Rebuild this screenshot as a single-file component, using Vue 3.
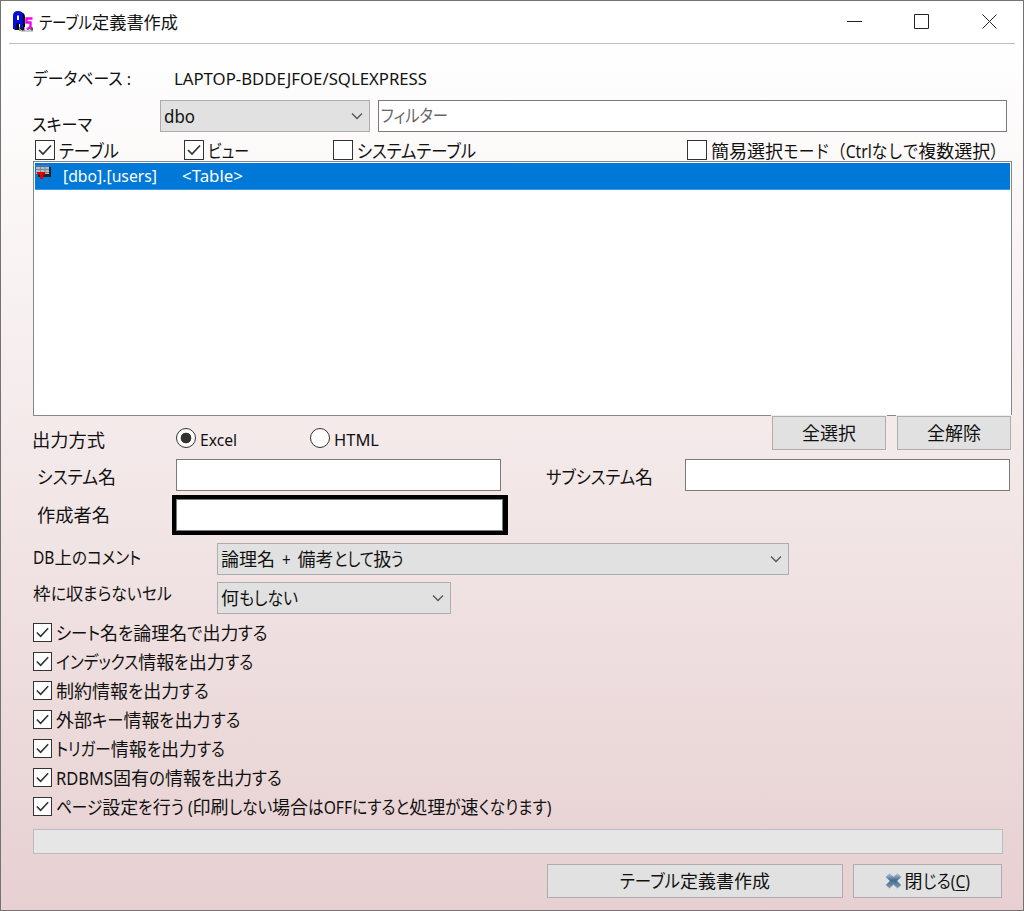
<script setup>
import { defineComponent, h, onMounted, ref } from 'vue'

// Text set to a given width: kanji keep their full width, kana and latin are condensed.
const FitText = defineComponent({
  props: { text: String, width: Number, underline: String },
  setup(props) {
    const root = ref(null)
    const runs = props.text.match(/[\u4e00-\u9fff]+|[^\u4e00-\u9fff]+/g)
    const styles = ref(runs.map(() => ({})))
    onMounted(() => {
      const sizes = [...root.value.children].map(e => e.getBoundingClientRect().width)
      const kanji = runs.map(r => /^[\u4e00-\u9fff]/.test(r))
      const all = kanji.every(Boolean)
      const flex = kanji.map(k => all || !k)
      const fixed = sizes.reduce((s, w, i) => s + (flex[i] ? 0 : w), 0)
      const loose = sizes.reduce((s, w, i) => s + (flex[i] ? w : 0), 0)
      const k = (props.width - fixed) / loose
      styles.value = runs.map((_, i) => flex[i]
        ? { width: sizes[i] * k + 'px', transform: `scaleX(${k})` }
        : {})
    })
    const body = r => {
      if (!props.underline || !r.includes(props.underline)) return r
      const [a, b] = r.split(props.underline)
      return [a, h('u', props.underline), b]
    }
    return () => h('span', { ref: root, class: 'fit' },
      runs.map((r, i) => h('span', { class: 'run', style: styles.value[i] }, body(r))))
  },
})

const filters = [
  { text: 'テーブル', width: 60, on: true, cls: 'c1' },
  { text: 'ビュー', width: 41, on: true, cls: 'c2' },
  { text: 'システムテーブル', width: 119, on: false, cls: 'c3' },
  { text: '簡易選択モード（Ctrlなしで複数選択）', width: 295, on: false, cls: 'c4' },
]
const options = [
  ['シート名を論理名で出力する', 212],
  ['インデックス情報を出力する', 197],
  ['制約情報を出力する', 153],
  ['外部キー情報を出力する', 184],
  ['トリガー情報を出力する', 169],
  ['RDBMS固有の情報を出力する', 226],
  ['ページ設定を行う (印刷しない場合はOFFにすると処理が速くなります)', 495],
]
</script>

<template>
  <div class="window">
    <header class="titlebar">
      <svg class="appicon" width="24" height="24" viewBox="0 0 24 24">
        <path d="M2.500 20V7Q2.500 3 7 2Q13 2 13 7V20H9V14H7V20Z" fill="#000" />
        <path d="M1 19V6Q1 1 6 1T11 6V19H8V13.500H4.500V19Z" fill="#0808e0" />
        <path d="M5 5.500h2v4.500H5z" fill="#fff" />
        <path d="M20.500 8.500H14.500V12.500H18.500V17L15 19.500" fill="none" stroke="#f400e8" stroke-width="2.400" />
        <path d="M8 17v4m0-4 3 4m0-4v4m9-4v4m-2-2h3" fill="none" stroke="#222" stroke-width="1" />
        <path d="M9 21h12M12.500 17v4m2-3h2" fill="none" stroke="#999" stroke-width="1" />
      </svg>
      <FitText class="title" text="テーブル定義書作成" :width="139" />
      <svg class="controls" width="152" height="18" viewBox="0 0 152 18" fill="none" stroke="#222">
        <path d="M0 8.500H15" /><path d="M67.500 1.500H81.500V15.500H67.500Z" /><path d="M135.500 1.500 149.500 15.500M149.500 1.500 135.500 15.500" />
      </svg>
    </header>
    <main>
      <div class="row database">
        <FitText class="label" text="データベース :" :width="98" />
        <FitText text="LAPTOP-BDDEJFOE/SQLEXPRESS" :width="253" />
      </div>
      <div class="row schema">
        <FitText class="label" text="スキーマ" :width="60" />
        <div class="select"><FitText text="dbo" :width="31" /><svg class="chev" viewBox="0 0 12 8"><path d="M1 1.500 6 6.500 11 1.500" /></svg></div>
        <div class="input"><FitText text="フィルター" :width="67" /></div>
      </div>
      <div class="row filters">
        <div v-for="f in filters" :key="f.text" class="option" :class="f.cls">
          <span class="box"><svg v-if="f.on" viewBox="0 0 18 18"><path d="M3 9 7 13 15 4.500" /></svg></span>
          <FitText :text="f.text" :width="f.width" />
        </div>
      </div>
      <div class="list">
        <div class="item">
          <svg width="17" height="17" viewBox="0 0 17 17">
            <path d="M3 3H16V13H3Z" fill="#24242c" /><path d="M1 2H14V10H1Z" fill="#b8bcc4" />
            <path d="M1 1H14V3H1Z" fill="#3c78b8" /><path d="M1 5.500H14M1 8.500H14M5.500 3V10M10 3V10" stroke="#85888f" />
            <path d="M2 8H10V10.500H8V15H5V10.500H2Z" fill="#e80000" />
          </svg>
          <FitText class="name" text="[dbo].[users]" :width="94" />
          <FitText text="<Table>" :width="61" />
        </div>
      </div>
      <div class="row output">
        <FitText class="label" text="出力方式" :width="73" />
        <div class="radio first"><i class="on"></i><FitText text="Excel" :width="37" /></div>
        <div class="radio"><i></i><FitText text="HTML" :width="45" /></div>
        <div class="btn"><FitText text="全選択" :width="54" /></div>
        <div class="btn last"><FitText text="全解除" :width="54" /></div>
      </div>
      <div class="row system">
        <FitText class="label" text="システム名" :width="79" />
        <div class="input"></div>
        <FitText class="sub" text="サブシステム名" :width="107" />
        <div class="input"></div>
      </div>
      <div class="row author">
        <FitText class="label" text="作成者名" :width="73" />
        <div class="focus"><div class="input"></div></div>
      </div>
      <div class="row comment">
        <FitText class="label" text="DB上のコメント" :width="108" />
        <div class="select"><FitText class="spaced" text="論理名 + 備考として扱う" :width="183" /><svg class="chev" viewBox="0 0 12 8"><path d="M1 1.500 6 6.500 11 1.500" /></svg></div>
      </div>
      <div class="row cell">
        <FitText class="label" text="枠に収まらないセル" :width="139" />
        <div class="select"><FitText text="何もしない" :width="77" /><svg class="chev" viewBox="0 0 12 8"><path d="M1 1.500 6 6.500 11 1.500" /></svg></div>
      </div>
      <div class="options">
        <div v-for="o in options" :key="o[0]" class="option">
          <span class="box"><svg viewBox="0 0 18 18"><path d="M3 9 7 13 15 4.500" /></svg></span>
          <FitText :text="o[0]" :width="o[1]" />
        </div>
      </div>
      <div class="progress"></div>
      <footer>
        <div class="btn create"><FitText text="テーブル定義書作成" :width="150" /></div>
        <div class="btn close">
          <svg width="17" height="16" viewBox="0 0 17 16">
            <defs><linearGradient id="x" x1="0" y1="0" x2="0" y2="1"><stop offset="0" stop-color="#a9c0d4" /><stop offset=".45" stop-color="#426c90" /><stop offset="1" stop-color="#7797b5" /></linearGradient></defs>
            <path d="M4.500 1 8.500 4 12.500 1 16 4 12 8 16 12 12.500 15 8.500 11.500 4.500 15 1 12 5 8 1 4Z" fill="url(#x)" stroke="#7896b0" stroke-width=".6" />
          </svg>
          <FitText text="閉じる(C)" :width="65" underline="C" />
        </div>
      </footer>
    </main>
  </div>
</template>

<style>
body { margin: 0; }
.fit { display: inline-flex; white-space: pre; flex: none; line-height: 24px; height: 24px; }
.fit .run { display: block; flex: none; transform-origin: 0 50%; white-space: pre; }
.fit u { text-underline-offset: 2px; text-decoration-thickness: 1px; }
</style>

<style scoped>
.window { box-sizing: border-box; width: 1024px; height: 911px; border: 1px solid #747274; background: linear-gradient(#fff 0, #fff 43px, #e7d0d1 100%); color: #111; font: 18px/24px "Noto Sans", "Noto Sans CJK JP", sans-serif; font-feature-settings: "palt"; overflow: hidden; }
.window * { box-sizing: border-box; }
.titlebar { height: 43px; margin: 0 8px; border-bottom: 1px solid #bebcbd; display: flex; align-items: center; padding-left: 3px; }
.title { margin-left: 3px; font-size: 17.200px; padding-top: 1px; }
.appicon { flex: none; }
.controls { margin-left: auto; margin-right: 16px; }
main { display: flex; flex-direction: column; }
.row { display: flex; padding-left: 32px; }
.label { width: 0; }
.database { height: 56px; padding-top: 23px; font-size: 17px; }
.database .label { width: 141px; }
.schema { height: 32px; font-size: 17.500px; }
.schema .label { width: 127px; margin-top: 12px; margin-left: -1px; margin-right: 1px; }
.schema .input { width: 629px; margin-left: 8px; color: #666; padding: 2px 0 0 2px; }
.select { height: 32px; background: #e1e1e1; border: 1px solid #adadad; display: flex; align-items: center; padding: 0 6px 0 3px; }
.schema .select { width: 210px; }
.spaced { word-spacing: 3.500px; }
.chev { width: 12px; height: 8px; margin-left: auto; fill: none; stroke: #555; stroke-width: 1.300; }
.input { height: 32px; border: 1px solid #7a7a7a; background: #fff; }
.filters { height: 29px; padding: 8px 0 0 34px; }
.filters .fit { margin-top: 2px; }
.option { display: flex; align-items: center; height: 20px; gap: 4px; }
.c1 { width: 149px; }
.c2 { width: 149px; }
.c3 { width: 354px; }
.c4 { font-feature-settings: normal; }
.box { flex: none; width: 20px; height: 20px; border: 1px solid #333; background: #fff; }
.box svg { display: block; width: 100%; height: 100%; fill: none; stroke: #333; stroke-width: 1.700; }
.list { margin-left: 32px; width: 979px; height: 255px; border: 1px solid #828790; background: #fff; padding: 1px; }
.item { height: 27px; background: #0078d7; color: #fff; display: flex; align-items: center; font-size: 17px; border-bottom: 1px solid #3d9aea; }
.item svg { align-self: flex-start; margin-top: 1px; }
.item .name { margin-left: 11px; margin-right: 25px; }
.output { height: 34px; padding-left: 31px; }
.output .label { width: 144px; margin-top: 12px; }
.radio { display: flex; gap: 4px; width: 134px; height: 20px; margin-top: 12px; align-items: center; font-size: 17px; }
.radio i { width: 20px; height: 20px; border: 1px solid #333; border-radius: 50%; background: #fff; flex: none; }
.radio .fit { margin-top: 3px; }
.radio i.on { background: radial-gradient(circle, #333 5px, #fff 5.700px); }
.btn { border: 1px solid #adadad; background: #e1e1e1; display: flex; align-items: center; justify-content: center; height: 34px; }
.output .btn { width: 114px; outline: 1px solid #f5ebec; outline-offset: 0; }
.output .radio + .btn { margin-left: 328px; }
.output .btn.last { margin-left: 11px; }
.system { height: 36px; margin-top: 9px; padding-left: 36px; }
.system .label { width: 139px; margin-top: 6px; }
.system .input { width: 325px; }
.system .sub { margin: 6px 32px 0 45px; }
.author { height: 40px; padding-left: 36px; }
.author .label { width: 135px; margin-top: 8px; }
.focus { width: 336px; height: 40px; background: #000; padding: 4px 5px 4px 4px; }
.comment { height: 32px; margin-top: 8px; }
.comment .label, .cell .label { width: 184px; font-size: 17.500px; }
.comment .label { margin-top: 2px; }
.comment .select { width: 572px; }
.cell { height: 32px; margin-top: 7px; }
.cell .label { margin-top: -1px; }
.cell .select { width: 234px; }
.options { display: flex; flex-direction: column; gap: 9px; margin: 9px 0 0 32px; height: 206px; }
.options .box { width: 19px; height: 19px; margin-top: -1px; }
.progress { width: 970px; height: 25px; margin-left: 32px; border: 1px solid #bcbcbc; background: #e6e6e6; }
footer { display: flex; gap: 10px; margin: 10px 0 0 546px; }
.create { width: 296px; }
.close { width: 149px; gap: 3px; }
.close svg { margin-left: -1px; }
</style>
